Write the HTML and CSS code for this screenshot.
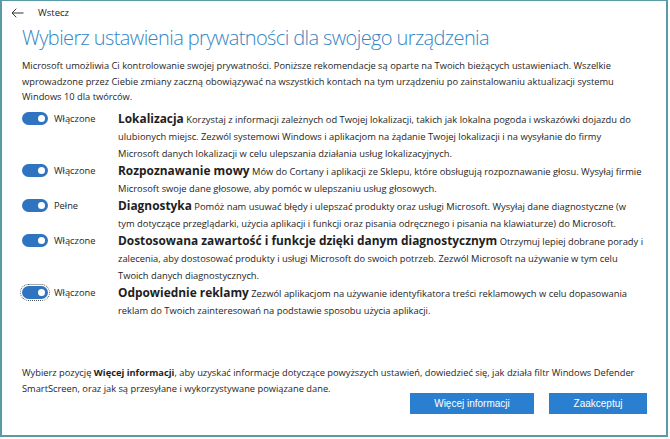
FILE: index.html
```html
<!DOCTYPE html>
<html lang="pl">
<head>
<meta charset="utf-8">
<title>Ustawienia prywatności</title>
<link rel="stylesheet" href="styles.css">
</head>
<body>
<div class="window">
  <header class="topbar">
    <svg class="back" width="13" height="10" viewBox="0 0 13 10" aria-hidden="true">
      <path d="M12.5 5H1M5.3 0.7L1 5l4.3 4.3" fill="none" stroke="#333" stroke-width="1"/>
    </svg>
    <span class="back-label">Wstecz</span>
  </header>
  <main class="content">
    <h1 class="title">Wybierz ustawienia prywatności dla swojego urządzenia</h1>
    <p class="intro">Microsoft umożliwia Ci kontrolowanie swojej prywatności. Poniższe rekomendacje są oparte na Twoich bieżących ustawieniach. Wszelkie wprowadzone przez Ciebie zmiany zaczną obowiązywać na wszystkich kontach na tym urządzeniu po zainstalowaniu aktualizacji systemu Windows 10 dla twórców.</p>
    <ul class="settings">
      <li class="setting">
        <span class="switch"><span class="knob"></span></span>
        <span class="state">Włączone</span>
        <p class="desc"><strong class="name">Lokalizacja</strong> Korzystaj z informacji zależnych od Twojej lokalizacji, takich jak lokalna pogoda i wskazówki dojazdu do<br>ulubionych miejsc. Zezwól systemowi Windows i aplikacjom na żądanie Twojej lokalizacji i na wysyłanie do firmy<br>Microsoft danych lokalizacji w celu ulepszania działania usług lokalizacyjnych.</p>
      </li>
      <li class="setting">
        <span class="switch"><span class="knob"></span></span>
        <span class="state">Włączone</span>
        <p class="desc"><strong class="name">Rozpoznawanie mowy</strong> Mów do Cortany i aplikacji ze Sklepu, które obsługują rozpoznawanie głosu. Wysyłaj firmie<br>Microsoft swoje dane głosowe, aby pomóc w ulepszaniu usług głosowych.</p>
      </li>
      <li class="setting">
        <span class="switch"><span class="knob"></span></span>
        <span class="state">Pełne</span>
        <p class="desc"><strong class="name">Diagnostyka</strong> Pomóż nam usuwać błędy i ulepszać produkty oraz usługi Microsoft. Wysyłaj dane diagnostyczne (w<br>tym dotyczące przeglądarki, użycia aplikacji i funkcji oraz pisania odręcznego i pisania na klawiaturze) do Microsoft.</p>
      </li>
      <li class="setting">
        <span class="switch"><span class="knob"></span></span>
        <span class="state">Włączone</span>
        <p class="desc"><strong class="name">Dostosowana zawartość i funkcje dzięki danym diagnostycznym</strong> Otrzymuj lepiej dobrane porady i<br>zalecenia, aby dostosować produkty i usługi Microsoft do swoich potrzeb. Zezwól Microsoft na używanie w tym celu<br>Twoich danych diagnostycznych.</p>
      </li>
      <li class="setting">
        <span class="switch focused"><span class="knob"></span></span>
        <span class="state">Włączone</span>
        <p class="desc"><strong class="name">Odpowiednie reklamy</strong> Zezwól aplikacjom na używanie identyfikatora treści reklamowych w celu dopasowania<br>reklam do Twoich zainteresowań na podstawie sposobu użycia aplikacji.</p>
      </li>
    </ul>
    <footer class="footer">
      <p class="more">Wybierz pozycję <strong>Więcej informacji</strong>, aby uzyskać informacje dotyczące powyższych ustawień, dowiedzieć się, jak działa filtr Windows Defender<br>SmartScreen, oraz jak są przesyłane i wykorzystywane powiązane dane.</p>
      <div class="actions">
        <button class="btn btn-more">Więcej informacji</button>
        <button class="btn btn-accept">Zaakceptuj</button>
      </div>
    </footer>
  </main>
</div>
</body>
</html>
```

FILE: styles.css
```css
* { box-sizing: border-box; }

html, body {
  margin: 0;
  padding: 0;
  background: #ffffff;
}

body {
  font-family: "Open Sans", "DejaVu Sans", sans-serif;
  color: #1e1e1e;
}

.window {
  width: 668px;
  height: 437px;
  border-style: solid;
  border-color: #5b9ba7;
  border-width: 1px 2px 2px 2px;
  display: flex;
  flex-direction: column;
  overflow: hidden;
}

.topbar {
  height: 23px;
  display: flex;
  align-items: center;
  gap: 14px;
  padding-left: 9px;
}

.back { display: block; }

.back-label {
  font-size: 9.5px;
  color: #222;
}

.content {
  flex: 1;
  display: flex;
  flex-direction: column;
  padding: 0 18px 0 20px;
}

.title {
  margin: 0;
  font-weight: 300;
  font-size: 20px;
  letter-spacing: -0.6px;
  line-height: 28px;
  color: #3586c2;
}

.intro {
  margin: 6px 0 0;
  font-size: 9.3px;
  line-height: 15.5px;
}

.settings {
  list-style: none;
  margin: 5px 0 0;
  padding: 0;
  display: flex;
  flex-direction: column;
}

.setting {
  display: grid;
  grid-template-columns: 32px 64px 1fr;
  align-items: start;
}

.switch {
  margin-top: 2px;
  width: 26px;
  height: 13px;
  border-radius: 7px;
  background: #2f74c0;
  display: flex;
  align-items: center;
  justify-content: flex-end;
  padding-right: 3px;
}

.switch.focused {
  outline: 1px dotted #555;
  outline-offset: 1px;
}

.knob {
  width: 7px;
  height: 7px;
  border-radius: 50%;
  background: #ffffff;
}

.state {
  font-size: 9.3px;
  line-height: 17px;
}

.desc {
  margin: 0;
  font-size: 9.35px;
  line-height: 17px;
  white-space: nowrap;
}

.name {
  font-size: 11.9px;
  font-weight: 700;
}

.footer {
  margin-top: auto;
  padding-bottom: 21px;
}

.more {
  margin: 0;
  font-size: 9.3px;
  line-height: 15.5px;
  white-space: nowrap;
}

.more strong { font-weight: 700; }

.actions {
  display: flex;
  justify-content: flex-end;
  gap: 15px;
  margin-top: -3px;
  padding-right: 1px;
}

.btn {
  height: 21px;
  border: none;
  background: #2a7fd0;
  color: #ffffff;
  font-family: "Liberation Sans", Arial, sans-serif;
  font-size: 10px;
  padding: 0;
}

.btn-more { width: 124px; }
.btn-accept { width: 98px; }
```
